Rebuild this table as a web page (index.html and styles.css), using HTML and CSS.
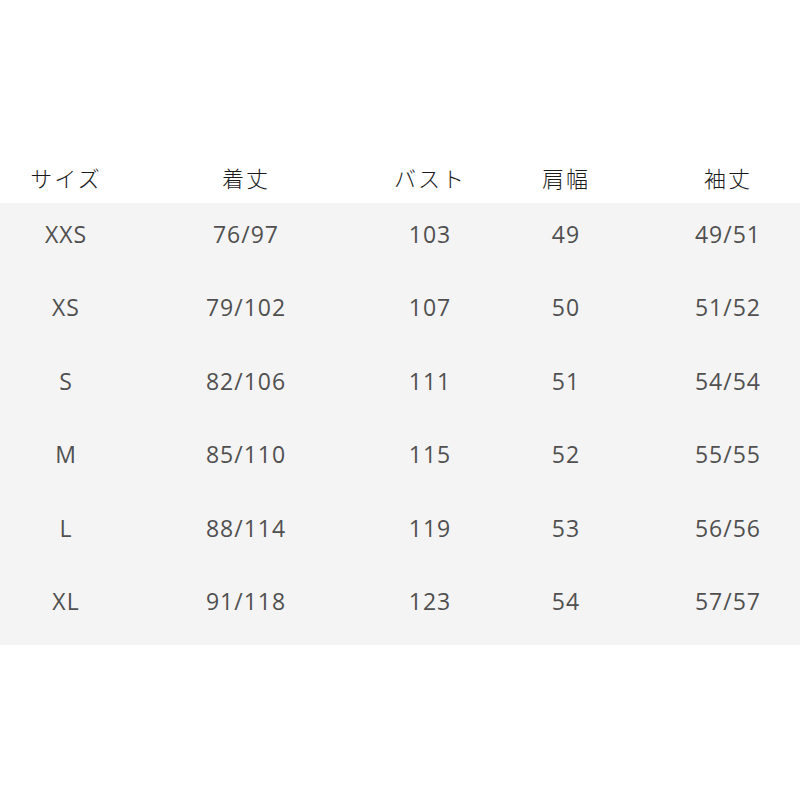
FILE: index.html
```html
<!DOCTYPE html>
<html lang="ja">
<head>
<meta charset="utf-8">
<link rel="stylesheet" href="styles.css">
</head>
<body>
<div class="page">
  <div class="row head">
    <div>サイズ</div><div>着丈</div><div>バスト</div><div>肩幅</div><div>袖丈</div>
  </div>
  <div class="body">
    <div class="row"><div>XXS</div><div>76/97</div><div>103</div><div>49</div><div>49/51</div></div>
    <div class="row"><div>XS</div><div>79/102</div><div>107</div><div>50</div><div>51/52</div></div>
    <div class="row"><div>S</div><div>82/106</div><div>111</div><div>51</div><div>54/54</div></div>
    <div class="row"><div>M</div><div>85/110</div><div>115</div><div>52</div><div>55/55</div></div>
    <div class="row"><div>L</div><div>88/114</div><div>119</div><div>53</div><div>56/56</div></div>
    <div class="row"><div>XL</div><div>91/118</div><div>123</div><div>54</div><div>57/57</div></div>
  </div>
</div>
</body>
</html>
```
FILE: styles.css
```css
html, body {
  margin: 0;
  padding: 0;
  background: #ffffff;
}
.page {
  width: 800px;
  height: 800px;
  padding-top: 166px;
  box-sizing: border-box;
}
.row {
  display: grid;
  grid-template-columns: 84px 276px 92px 180px 144px;
  padding-left: 24px;
  text-align: center;
  white-space: nowrap;
}
.head {
  height: 37px;
  font-family: "Noto Sans CJK JP", sans-serif;
  font-size: 22px;
  font-weight: 300;
  line-height: 22px;
  letter-spacing: 2px;
  color: #1a1a1a;
}
.body {
  background: #f4f4f4;
  height: 442px;
}
.body .row {
  height: 73.4px;
  box-sizing: border-box;
  padding-top: 20px;
  font-family: "Open Sans", sans-serif;
  font-size: 23px;
  line-height: 22px;
  letter-spacing: 1px;
  color: #505050;
}
```
